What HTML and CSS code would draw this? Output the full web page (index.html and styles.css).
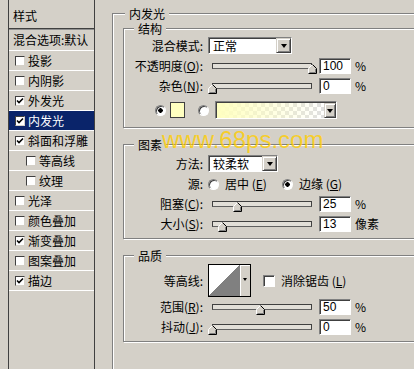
FILE: index.html
```html
<!DOCTYPE html>
<html lang="zh-CN">

<head>
    <meta charset="UTF-8">
    <title>图层样式</title>
    <link rel="stylesheet" href="styles.css">
</head>

<body>

    <svg class="defs" width="0" height="0">
        <symbol id="thumb" viewBox="0 0 9 10">
            <path d="M4.5 0.5 L8.5 4.5 V9.5 H0.5 V4.5 Z" fill="#d4d0c8" />
            <path d="M0.5 9.5 V4.5 L4.5 0.5" stroke="#fff" fill="none" />
            <path d="M4.5 0.5 L8.5 4.5 V9.5 H0.5" stroke="#000" fill="none" />
            <path d="M7.5 5 V8.5 H1.5" stroke="#808080" fill="none" />
        </symbol>
        <symbol id="tick" viewBox="0 0 8 8">
            <path d="M1 3.5 L3 5.5 L7 1.5" stroke="#000" stroke-width="1.6" fill="none" />
        </symbol>
    </svg>

    <div class="dialog">
        <ul class="style_list">
            <li class="list_head">样式</li>
            <li class="list_blend">混合选项:默认</li>
            <li><i class="check"></i>投影</li>
            <li><i class="check"></i>内阴影</li>
            <li><i class="check"><svg><use href="#tick" /></svg></i>外发光</li>
            <li class="active"><i class="check"><svg><use href="#tick" /></svg></i>内发光</li>
            <li><i class="check"><svg><use href="#tick" /></svg></i>斜面和浮雕</li>
            <li class="sub"><i class="check"></i>等高线</li>
            <li class="sub"><i class="check"></i>纹理</li>
            <li><i class="check"></i>光泽</li>
            <li><i class="check"></i>颜色叠加</li>
            <li><i class="check"><svg><use href="#tick" /></svg></i>渐变叠加</li>
            <li><i class="check"></i>图案叠加</li>
            <li><i class="check"><svg><use href="#tick" /></svg></i>描边</li>
        </ul>

        <div class="panel">
            <fieldset class="group outer">
                <legend>内发光</legend>

                <fieldset class="group inner struct">
                    <legend>结构</legend>
                    <div class="row r_first">
                        <span class="lbl">混合模式:</span>
                        <div class="combo combo_mode"><span>正常</span><i class="drop"></i></div>
                    </div>
                    <div class="row">
                        <span class="lbl">不透明度(<u>O</u>):</span>
                        <div class="slider">
                            <div class="track"></div>
                            <svg class="thumb" style="left: 100px"><use href="#thumb" /></svg>
                        </div>
                        <span class="num">100</span><span class="unit">%</span>
                    </div>
                    <div class="row">
                        <span class="lbl">杂色(<u>N</u>):</span>
                        <div class="slider">
                            <div class="track"></div>
                            <svg class="thumb" style="left: 0px"><use href="#thumb" /></svg>
                        </div>
                        <span class="num">0</span><span class="unit">%</span>
                    </div>
                    <div class="row r_color">
                        <i class="radio on"></i>
                        <i class="swatch"></i>
                        <i class="radio"></i>
                        <div class="gradient"><i class="gradient_fill"></i><i class="drop"></i></div>
                    </div>
                </fieldset>

                <fieldset class="group inner pixel">
                    <legend>图素</legend>
                    <div class="row r_first">
                        <span class="lbl">方法:</span>
                        <div class="combo combo_method"><span>较柔软</span><i class="drop"></i></div>
                    </div>
                    <div class="row">
                        <span class="lbl">源:</span>
                        <span class="opt"><i class="radio"></i>居中 (<u>E</u>)</span>
                        <span class="opt"><i class="radio on"></i>边缘 (<u>G</u>)</span>
                    </div>
                    <div class="row">
                        <span class="lbl">阻塞(<u>C</u>):</span>
                        <div class="slider">
                            <div class="track"></div>
                            <svg class="thumb" style="left: 25px"><use href="#thumb" /></svg>
                        </div>
                        <span class="num">25</span><span class="unit">%</span>
                    </div>
                    <div class="row">
                        <span class="lbl">大小(<u>S</u>):</span>
                        <div class="slider">
                            <div class="track"></div>
                            <svg class="thumb" style="left: 10px"><use href="#thumb" /></svg>
                        </div>
                        <span class="num">13</span><span class="unit">像素</span>
                    </div>
                </fieldset>

                <fieldset class="group inner quality">
                    <legend>品质</legend>
                    <div class="row r_contour">
                        <span class="lbl">等高线:</span>
                        <div class="contour"><i class="curve"></i><i class="pick"></i></div>
                        <i class="check big"></i><span>消除锯齿 (<u>L</u>)</span>
                    </div>
                    <div class="row">
                        <span class="lbl">范围(<u>R</u>):</span>
                        <div class="slider">
                            <div class="track"></div>
                            <svg class="thumb" style="left: 48px"><use href="#thumb" /></svg>
                        </div>
                        <span class="num">50</span><span class="unit">%</span>
                    </div>
                    <div class="row">
                        <span class="lbl">抖动(<u>J</u>):</span>
                        <div class="slider">
                            <div class="track"></div>
                            <svg class="thumb" style="left: 0px"><use href="#thumb" /></svg>
                        </div>
                        <span class="num">0</span><span class="unit">%</span>
                    </div>
                </fieldset>
            </fieldset>

            <div class="watermark">www.68ps.com</div>
        </div>
    </div>

</body>

</html>
```

FILE: styles.css
```css
* {
    margin: 0;
    padding: 0;
}

html,
body {
    width: 414px;
    height: 369px;
    overflow: hidden;
}

body {
    background: #d4d0c8;
    font-family: "Noto Sans CJK SC", "Noto Sans", sans-serif;
    font-size: 12px;
    color: #000;
}

i {
    display: block;
    font-style: normal;
}

.defs {
    position: absolute;
    width: 0;
    height: 0;
    overflow: hidden;
}

.dialog {
    display: flex;
    height: 369px;
}

/* 左侧样式列表 */
.style_list {
    flex: none;
    width: 87px;
    height: 369px;
    margin-left: 8px;
    border-left: 1px solid #404040;
    border-right: 1px solid #404040;
    box-sizing: border-box;
    list-style: none;
}

.style_list li {
    display: flex;
    align-items: center;
    height: 20px;
    padding-left: 6px;
    border-bottom: 1px solid #fff;
    box-sizing: border-box;
    white-space: nowrap;
    line-height: 14px;
}

.style_list .list_head {
    height: 29px;
    padding: 3px 0 0 4px;
    border-bottom: 1px solid #404040;
}

.style_list .list_blend {
    height: 22px;
    padding-left: 4px;
    border-top: 1px solid #909090;
}

.style_list .sub {
    padding-left: 17px;
}

.style_list .active {
    background: #0a246a;
    color: #fff;
}

.check {
    flex: none;
    display: flex;
    align-items: center;
    justify-content: center;
    width: 10px;
    height: 10px;
    margin-right: 3px;
    box-sizing: border-box;
    border: 1px solid;
    border-color: #404040 #d4d0c8 #d4d0c8 #404040;
    background: #fff;
}

.check svg {
    width: 8px;
    height: 8px;
}

.check.big {
    width: 12px;
    height: 12px;
    border-color: #808080 #fff #fff #808080;
    box-shadow: inset 1px 1px 0 #404040;
}

/* 右侧面板 */
.panel {
    position: relative;
    flex: none;
    width: 330px;
    margin-left: 17px;
}

.group {
    min-width: 0;
    border: 1px solid #808080;
    box-shadow: inset 1px 1px 0 #fff, 1px 1px 0 #fff;
}

.group legend {
    height: 15px;
    line-height: 15px;
    padding: 0 4px;
    margin-left: 10px;
    background: #d4d0c8;
}

.outer {
    margin-top: 6px;
    height: 380px;
}

.outer > legend {
    margin-left: 12px;
}

.inner {
    margin-left: 10px;
}

.struct {
    padding-bottom: 7px;
}

.pixel,
.quality {
    margin-top: 9px;
    padding-bottom: 4px;
}

.row {
    display: flex;
    align-items: center;
    height: 20px;
    line-height: 14px;
    white-space: nowrap;
}

.row .lbl {
    flex: none;
    width: 79px;
    margin-right: 5px;
    text-align: right;
}

.r_first {
    height: 17px;
    margin-top: 1px;
    margin-bottom: 2px;
}

.pixel .r_first {
    margin-top: 3px;
}

.r_color {
    margin-top: 4px;
    padding-left: 31px;
}

.r_contour {
    height: 33px;
    margin-top: 1px;
}

/* 下拉框 */
.combo {
    display: flex;
    height: 17px;
    box-sizing: border-box;
    border: 1px solid;
    border-color: #808080 #fff #fff #808080;
    box-shadow: inset 1px 1px 0 #404040;
    background: #fff;
}

.combo span {
    flex: 1;
    padding-left: 4px;
    line-height: 15px;
}

.combo_mode {
    width: 84px;
}

.combo_method {
    width: 70px;
}

.drop {
    flex: none;
    display: flex;
    align-items: center;
    justify-content: center;
    width: 15px;
    box-sizing: border-box;
    background: #d4d0c8;
    border: 1px solid;
    border-color: #d4d0c8 #404040 #404040 #d4d0c8;
    box-shadow: inset 1px 1px 0 #fff, inset -1px -1px 0 #808080;
}

.drop::after {
    content: '';
    border-style: solid;
    border-width: 4px 3.5px 0;
    border-color: #000 transparent transparent;
}

/* 滑块 */
.slider {
    position: relative;
    flex: none;
    width: 108px;
    height: 20px;
}

.track {
    height: 6px;
    margin: 7px 4px 0;
    box-sizing: border-box;
    border: 1px solid;
    border-color: #404040 #404040 #606060 #404040;
    background: #e2dfd8;
}

.thumb {
    position: absolute;
    top: 8px;
    width: 9px;
    height: 10px;
}

.num {
    flex: none;
    width: 32px;
    height: 16px;
    margin-left: 3px;
    padding: 1px 0 0 3px;
    box-sizing: border-box;
    border: 1px solid;
    border-color: #808080 #fff #fff #808080;
    box-shadow: inset 1px 1px 0 #404040;
    background: #fff;
    font-family: "Liberation Sans", Arial, sans-serif;
    line-height: 13px;
}

.unit {
    margin-left: 4px;
}

/* 单选 */
.radio {
    flex: none;
    width: 11px;
    height: 11px;
    box-sizing: border-box;
    border-radius: 50%;
    border: 1px solid;
    border-color: #808080 #fff #fff #808080;
    box-shadow: inset 1px 1px 0 #404040;
    background: #fff;
}

.radio.on {
    background: radial-gradient(circle, #000 2px, #fff 2.5px);
}

.opt {
    display: flex;
    align-items: center;
    width: 74px;
}

.opt .radio {
    margin-right: 6px;
}

/* 颜色 */
.swatch {
    width: 15px;
    height: 16px;
    margin: 0 13px 0 4px;
    box-sizing: border-box;
    border: 1px solid #404040;
    background: #ffffc0;
}

.gradient {
    display: flex;
    width: 122px;
    height: 18px;
    margin-left: 6px;
    box-sizing: border-box;
    border: 1px solid;
    border-color: #808080 #fff #fff #808080;
    box-shadow: inset 1px 1px 0 #404040;
    padding: 1px 0 0 1px;
}

.gradient_fill {
    flex: 1;
    background:
        linear-gradient(to right, #ffffc0, rgba(255, 255, 192, 0)),
        linear-gradient(45deg, #e0e0e0 25%, transparent 25%, transparent 75%, #e0e0e0 75%),
        linear-gradient(45deg, #e0e0e0 25%, #fff 25%, #fff 75%, #e0e0e0 75%);
    background-size: 100% 100%, 8px 8px, 8px 8px;
    background-position: 0 0, 0 0, 4px 4px;
}

.gradient .drop {
    width: 12px;
}

/* 等高线 */
.contour {
    display: flex;
    width: 43px;
    height: 33px;
    box-sizing: border-box;
    border: 1px solid #000;
    margin-right: 12px;
}

.curve {
    flex: 1;
    background: linear-gradient(to top left, #808080 50%, #fff 50%);
}

.pick {
    display: flex;
    justify-content: center;
    width: 11px;
    padding-top: 13px;
    box-sizing: border-box;
    background: #d4d0c8;
    border-left: 1px solid #808080;
    box-shadow: inset 1px 1px 0 #fff;
}

.pick::after {
    content: '';
    border-style: solid;
    border-width: 3px 2.5px 0;
    border-color: #000 transparent transparent;
    height: 0;
}

.r_contour .check.big {
    margin-right: 6px;
}

.watermark {
    position: absolute;
    left: 50px;
    top: 128px;
    font-family: "Liberation Sans", Arial, sans-serif;
    font-size: 24px;
    line-height: 24px;
    color: rgba(255, 205, 0, 0.8);
    pointer-events: none;
}
```
